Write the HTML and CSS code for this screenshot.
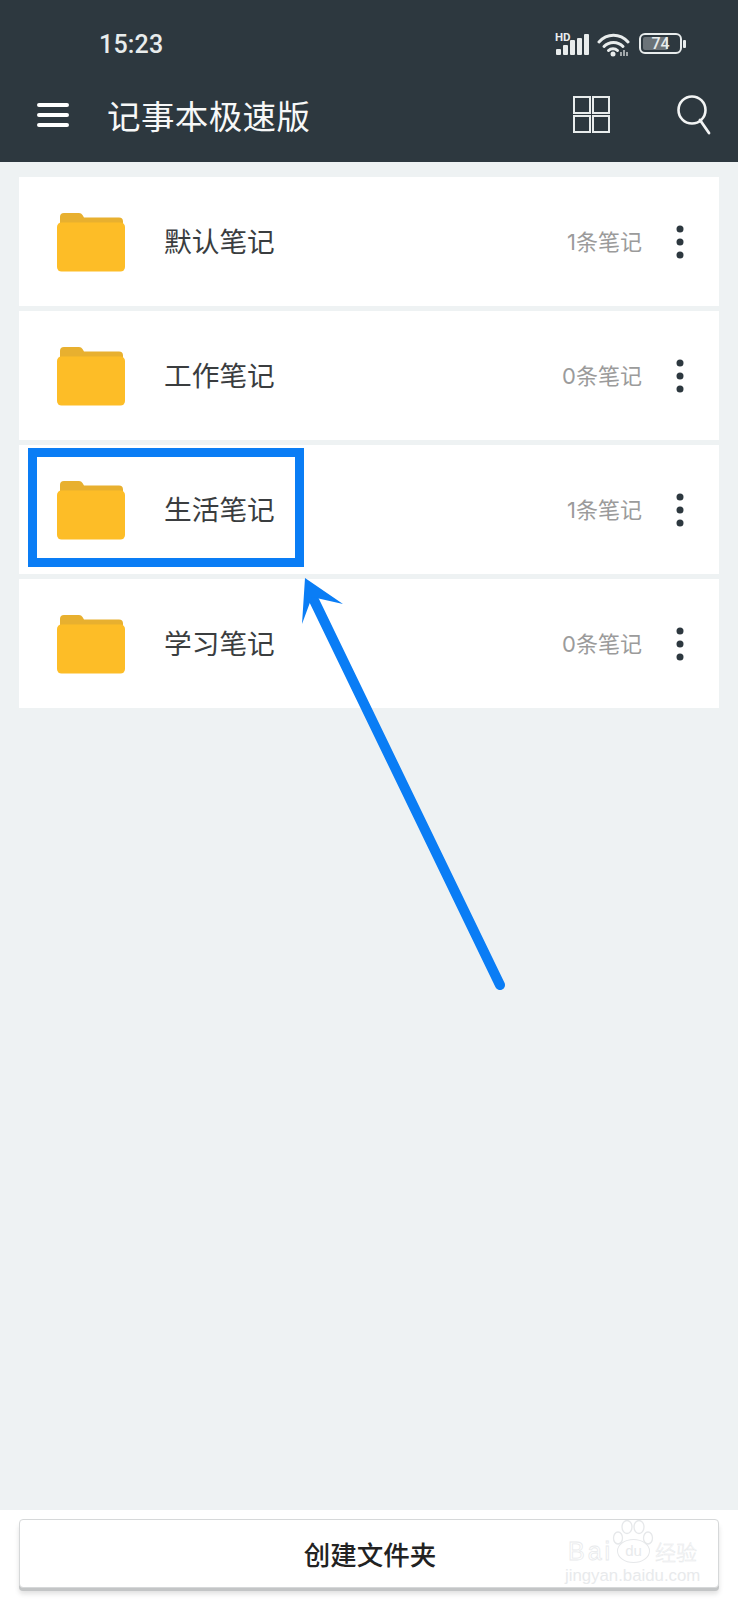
FILE: index.html
```html
<!DOCTYPE html>
<html lang="zh-CN">
<head>
<meta charset="utf-8">
<title>记事本极速版</title>
<link rel="stylesheet" href="styles.css">
</head>
<body>
<svg width="0" height="0" class="defs">
  <symbol id="folder" viewBox="0 0 68 60">
    <path d="M3 12V5a4 4 0 0 1 4-4h15a4 4 0 0 1 3.500 2l1.500 2.500h35a4 4 0 0 1 4 4V12z" fill="#e8b02f"/>
    <rect x="0" y="10.500" width="68" height="49" rx="4.500" fill="#fdbd27"/>
  </symbol>
  <symbol id="dots" viewBox="0 0 8 34">
    <circle cx="4" cy="4" r="3.500" fill="#2d383f"/>
    <circle cx="4" cy="17" r="3.500" fill="#2d383f"/>
    <circle cx="4" cy="30" r="3.500" fill="#2d383f"/>
  </symbol>
</svg>
<div class="page">
  <header class="top">
    <div class="status">
      <span class="time">15:23</span>
      <div class="status-icons">
        <div class="signal">
          <span class="hd">HD</span>
          <svg width="34" height="21" viewBox="0 0 34 21"><g fill="#e8ecec"><rect x="0" y="15" width="5" height="6" rx="1"/><rect x="7" y="11" width="5" height="10" rx="1"/><rect x="14" y="6" width="5" height="15" rx="1"/><rect x="21" y="4" width="5" height="17" rx="1"/><rect x="28" y="0" width="5" height="21" rx="1"/></g></svg>
        </div>
        <svg class="wifi" width="33" height="25" viewBox="0 0 33 25"><g fill="none" stroke="#e8ecec" stroke-width="3" stroke-linecap="round"><path d="M2 10C10 1 23 1 31 10"/><path d="M7 14.500C12 9 21 9 26 14.500"/><path d="M11.500 18.500C14 16 18 16 20.500 18.500"/></g><circle cx="16" cy="22" r="2.500" fill="#e8ecec"/><path d="M24 20v4M27 18v6M30 20v4" stroke="#aeb4b6" stroke-width="1.800"/></svg>
        <div class="battery">
          <div class="battery-body"><span class="battery-fill"></span><span class="battery-num">74</span></div>
          <span class="battery-nub"></span>
        </div>
      </div>
    </div>
    <div class="appbar">
      <svg class="menu" width="32" height="24" viewBox="0 0 32 24"><path d="M2 2h28M2 12h28M2 22h28" stroke="#fff" stroke-width="4" stroke-linecap="round"/></svg>
      <h1 class="title">记事本极速版</h1>
      <svg class="grid-icon" width="38" height="38" viewBox="0 0 38 38"><g fill="none" stroke="#e8ecec" stroke-width="2"><rect x="1" y="1" width="16" height="16"/><rect x="20" y="1" width="16" height="16"/><rect x="1" y="20" width="16" height="16"/><rect x="20" y="20" width="16" height="16"/></g></svg>
      <svg class="search-icon" width="34" height="40" viewBox="0 0 34 40"><circle cx="15" cy="15" r="13.500" fill="none" stroke="#f2f4f4" stroke-width="2.600"/><path d="M23 25L32 38" stroke="#f2f4f4" stroke-width="2.800" stroke-linecap="round"/></svg>
    </div>
  </header>

  <main class="list">
    <div class="card"><svg class="folder"><use href="#folder"/></svg><span class="name">默认笔记</span><span class="count">1条笔记</span><svg class="more"><use href="#dots"/></svg></div>
    <div class="card"><svg class="folder"><use href="#folder"/></svg><span class="name">工作笔记</span><span class="count">0条笔记</span><svg class="more"><use href="#dots"/></svg></div>
    <div class="card"><svg class="folder"><use href="#folder"/></svg><span class="name">生活笔记</span><span class="count">1条笔记</span><svg class="more"><use href="#dots"/></svg></div>
    <div class="card"><svg class="folder"><use href="#folder"/></svg><span class="name">学习笔记</span><span class="count">0条笔记</span><svg class="more"><use href="#dots"/></svg></div>
  </main>

  <footer class="bottom">
    <div class="create">创建文件夹</div>
  </footer>

  <div class="highlight"></div>
  <svg class="arrow" width="738" height="1600" viewBox="0 0 738 1600">
    <path d="M500 985L311 594" stroke="#0a7df5" stroke-width="10" stroke-linecap="round" fill="none"/>
    <path d="M305 578L343 604L312 597L302 624z" fill="#0a7df5"/>
  </svg>

  <div class="watermark">
    <svg class="paw" width="42" height="44" viewBox="0 0 42 44"><g fill="none" stroke="#e6e8ea" stroke-width="1.300"><ellipse cx="6" cy="18" rx="4.500" ry="6"/><ellipse cx="15" cy="7" rx="5" ry="6.500"/><ellipse cx="27" cy="7" rx="5" ry="6.500"/><ellipse cx="36" cy="18" rx="4.500" ry="6"/></g></svg>
    <div class="wm-row"><span class="wm-bai">Bai</span><span class="wm-du">du</span><span class="wm-jy">经验</span></div>
    <div class="wm-url">jingyan.baidu.com</div>
  </div>
</div>
</body>
</html>
```
FILE: styles.css
```css
* { box-sizing: border-box; }
html, body { margin: 0; padding: 0; }
body {
  width: 738px;
  height: 1600px;
  overflow: hidden;
  font-family: "Noto Sans CJK SC", "Noto Sans", sans-serif;
  background: #eef2f3;
}
.defs { position: absolute; }
.page {
  position: relative;
  width: 738px;
  height: 1600px;
  display: flex;
  flex-direction: column;
}

/* header */
.top {
  height: 162px;
  background: #2d383f;
  color: #fff;
  flex: none;
}
.status {
  height: 86px;
  padding: 30px 52px 0 99px;
  display: flex;
  align-items: flex-start;
  justify-content: space-between;
}
.time {
  font-family: Roboto, sans-serif;
  font-size: 25px;
  font-weight: 500;
  letter-spacing: 0.2px;
  line-height: 30px;
  color: #e8ecec;
}
.status-icons {
  display: flex;
  align-items: flex-start;
  gap: 7px;
  padding-top: 2px;
}
.signal { position: relative; width: 34px; height: 24px; padding-top: 2px; }
.hd {
  position: absolute;
  left: -1px;
  top: 0;
  font-family: Roboto, sans-serif;
  font-size: 11.500px;
  font-weight: 700;
  line-height: 10px;
  color: #e8ecec;
}
.signal svg { display: block; }
.wifi { display: block; }
.battery { display: flex; align-items: center; margin-left: 2px; padding-top: 1px; }
.battery-body {
  position: relative;
  width: 43px;
  height: 21px;
  border: 2px solid #e8ecec;
  border-radius: 6px;
  padding: 2px;
  display: flex;
}
.battery-fill { width: 72%; background: #6b7378; border-radius: 2px; }
.battery-num {
  position: absolute;
  inset: 0;
  text-align: center;
  font-family: Roboto, sans-serif;
  font-size: 16px;
  font-weight: 500;
  line-height: 17px;
  color: #e8ecec;
}
.battery-nub { width: 3px; height: 8px; margin-left: 1px; background: #e8ecec; border-radius: 1px; }

.appbar {
  height: 62px;
  padding-left: 37px;
  display: flex;
  align-items: center;
}
.menu { display: block; flex: none; margin-top: -5px; }
.title {
  margin: -6px 0 -1px 38px;
  font-size: 33.500px;
  font-weight: 400;
  letter-spacing: 0.4px;
  line-height: 44px;
  color: #f7f8f8;
}
.grid-icon { display: block; flex: none; margin-left: auto; margin-top: -5px; }
.search-icon { display: block; flex: none; margin: -5px 27px 0 66px; }

/* list */
.list {
  flex: 1;
  padding: 15px 19px 0;
  display: flex;
  flex-direction: column;
  gap: 5px;
}
.card {
  height: 129px;
  background: #fff;
  display: flex;
  align-items: center;
  padding-left: 38px;
  padding-right: 35px;
}
.folder { width: 68px; height: 60px; flex: none; }
.name {
  margin: -4px 0 0 39px;
  font-size: 27.700px;
  line-height: 40px;
  color: #3a3d3f;
}
.count {
  margin-left: auto;
  font-family: Inter, "Noto Sans CJK SC", sans-serif;
  font-size: 22px;
  line-height: 30px;
  color: #9b9b9b;
}
.more { width: 8px; height: 34px; margin-left: 34px; flex: none; }

/* bottom */
.bottom {
  flex: none;
  height: 90px;
  background: #fff;
  padding: 9px 19px 0;
}
.create {
  height: 69px;
  padding-left: 2px;
  background: #fff;
  border: 1px solid #d6d8d9;
  border-radius: 4px;
  box-shadow: 0 3px 0 #c3c5c6, 0 6px 5px rgba(0, 0, 0, 0.12);
  display: flex;
  align-items: center;
  justify-content: center;
  font-size: 26.500px;
  font-weight: 500;
  color: #222;
}

/* overlays */
.highlight {
  position: absolute;
  left: 28px;
  top: 448px;
  width: 276px;
  height: 119px;
  border: 9px solid #0a7df5;
}
.arrow { position: absolute; left: 0; top: 0; pointer-events: none; }
.watermark {
  position: absolute;
  left: 565px;
  top: 1531px;
  width: 135px;
  height: 60px;
  color: #e8eaec;
  pointer-events: none;
}
.paw { position: absolute; left: 47px; top: -11px; }
.wm-row {
  position: absolute;
  left: 3px;
  top: 5px;
  width: 135px;
  display: flex;
  align-items: center;
  line-height: 30px;
}
.wm-bai {
  font-family: "Liberation Sans", sans-serif;
  font-size: 25px;
  letter-spacing: 3px;
  width: 49px;
  color: #fff;
  -webkit-text-stroke: 0.8px #e8eaec;
}
.wm-du {
  font-family: "Liberation Sans", sans-serif;
  font-size: 15px;
  width: 33px;
  height: 24px;
  line-height: 22px;
  text-align: center;
  border: 1px solid #e6e8ea;
  border-radius: 50%;
}
.wm-jy {
  font-size: 21px;
  font-weight: 300;
  margin-left: 5px;
  white-space: nowrap;
  color: #fff;
  -webkit-text-stroke: 0.5px #e6e8ea;
}
.wm-url {
  position: absolute;
  left: 0;
  top: 35px;
  font-family: "Liberation Sans", sans-serif;
  font-size: 16.800px;
  line-height: 20px;
  white-space: nowrap;
}
```
